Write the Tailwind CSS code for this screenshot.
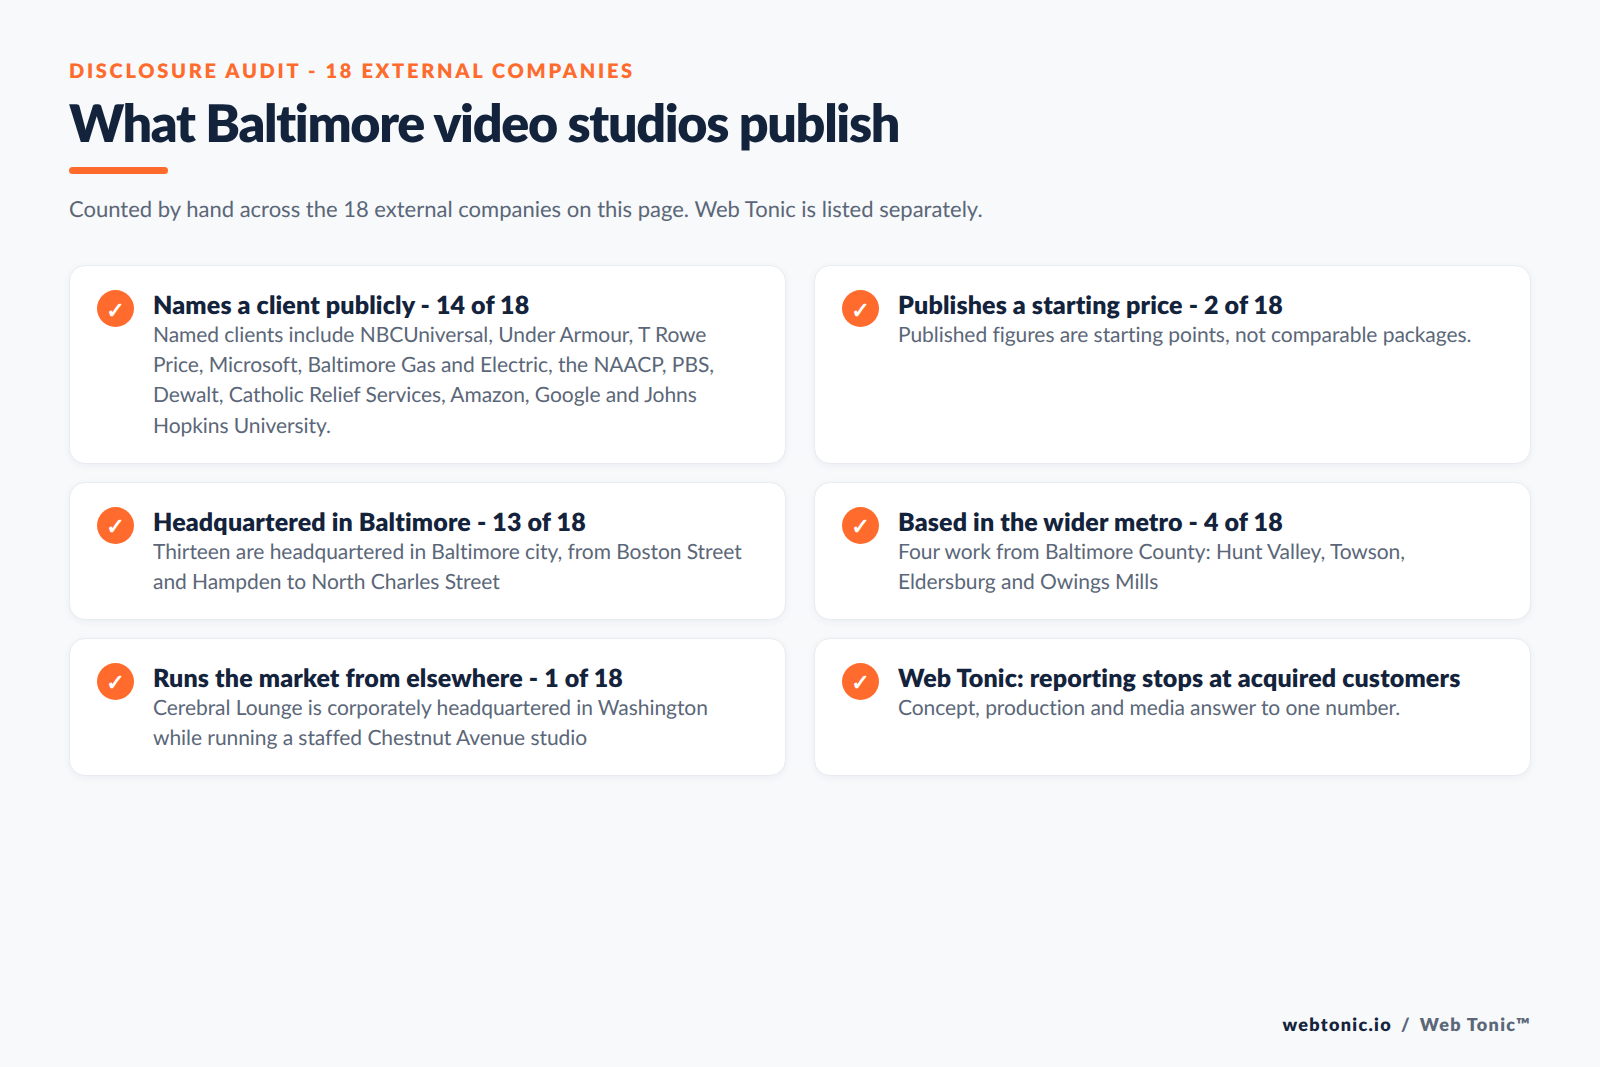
<!DOCTYPE html>
<html lang="en">
<head>
    <meta charset="UTF-8">
    <title>What Baltimore video studios publish</title>
    <script src="https://cdn.jsdelivr.net/npm/@tailwindcss/browser@4"></script>
</head>
<body class="bg-[#f7f9fb] font-['Lato',sans-serif] [text-rendering:geometricPrecision]">
    <div class="relative h-[1067px] w-[1600px] px-[69px] pt-[56px]">
        <div class="text-[20px] leading-[30px] font-extrabold tracking-[2.7px] text-[#ff6b2c]">DISCLOSURE AUDIT - 18 EXTERNAL COMPANIES</div>
        <h1 class="mt-[6px] text-[52px] leading-[62px] font-extrabold tracking-[-1.33px] text-[#14233c]">What Baltimore video studios publish</h1>
        <div class="mt-[13px] h-[7px] w-[99px] rounded-full bg-[#ff6b2c]"></div>
        <p class="mt-[18px] text-[22px] leading-[34px] text-[#5b6778]">Counted by hand across the 18 external companies on this page. Web Tonic is listed separately.</p>

        <div class="mt-[39px] grid w-[1462px] grid-cols-2 gap-x-[28px] gap-y-[18px]">
            <div class="flex gap-[19px] rounded-[16px] border border-[#e8ebef] bg-white pt-[23px] pr-[36px] pb-[21.6px] pl-[27px] shadow-[0_2px_8px_rgba(20,35,60,0.05)]">
                <div class="mt-[1px] flex h-[37px] w-[37px] shrink-0 items-center justify-center rounded-full bg-[#ff6b2c] pt-[1px] text-[22px] font-bold text-white">✓</div>
                <div class="mt-[2px]">
                    <h3 class="text-[25px] leading-[29px] font-extrabold tracking-[0.14px] text-[#14233c]">Names a client publicly - 14 of 18</h3>
                    <p class="text-[21px] leading-[30.24px] tracking-[-0.06px] text-[#5b6778]">Named clients include NBCUniversal, Under Armour, T Rowe Price, Microsoft, Baltimore Gas and Electric, the NAACP, PBS, Dewalt, Catholic Relief Services, Amazon, Google and Johns Hopkins University.</p>
                </div>
            </div>
            <div class="flex gap-[19px] rounded-[16px] border border-[#e8ebef] bg-white pt-[23px] pr-[36px] pb-[21.6px] pl-[27px] shadow-[0_2px_8px_rgba(20,35,60,0.05)]">
                <div class="mt-[1px] flex h-[37px] w-[37px] shrink-0 items-center justify-center rounded-full bg-[#ff6b2c] pt-[1px] text-[22px] font-bold text-white">✓</div>
                <div class="mt-[2px]">
                    <h3 class="text-[25px] leading-[29px] font-extrabold tracking-[0.14px] text-[#14233c]">Publishes a starting price - 2 of 18</h3>
                    <p class="text-[21px] leading-[30.24px] tracking-[-0.06px] text-[#5b6778]">Published figures are starting points, not comparable packages.</p>
                </div>
            </div>
            <div class="flex gap-[19px] rounded-[16px] border border-[#e8ebef] bg-white pt-[23px] pr-[36px] pb-[21.6px] pl-[27px] shadow-[0_2px_8px_rgba(20,35,60,0.05)]">
                <div class="mt-[1px] flex h-[37px] w-[37px] shrink-0 items-center justify-center rounded-full bg-[#ff6b2c] pt-[1px] text-[22px] font-bold text-white">✓</div>
                <div class="mt-[2px]">
                    <h3 class="text-[25px] leading-[29px] font-extrabold tracking-[0.14px] text-[#14233c]">Headquartered in Baltimore - 13 of 18</h3>
                    <p class="text-[21px] leading-[30.24px] tracking-[-0.06px] text-[#5b6778]">Thirteen are headquartered in Baltimore city, from Boston Street and Hampden to North Charles Street</p>
                </div>
            </div>
            <div class="flex gap-[19px] rounded-[16px] border border-[#e8ebef] bg-white pt-[23px] pr-[36px] pb-[21.6px] pl-[27px] shadow-[0_2px_8px_rgba(20,35,60,0.05)]">
                <div class="mt-[1px] flex h-[37px] w-[37px] shrink-0 items-center justify-center rounded-full bg-[#ff6b2c] pt-[1px] text-[22px] font-bold text-white">✓</div>
                <div class="mt-[2px]">
                    <h3 class="text-[25px] leading-[29px] font-extrabold tracking-[0.14px] text-[#14233c]">Based in the wider metro - 4 of 18</h3>
                    <p class="text-[21px] leading-[30.24px] tracking-[-0.06px] text-[#5b6778]">Four work from Baltimore County: Hunt Valley, Towson, Eldersburg and Owings Mills</p>
                </div>
            </div>
            <div class="flex gap-[19px] rounded-[16px] border border-[#e8ebef] bg-white pt-[23px] pr-[36px] pb-[21.6px] pl-[27px] shadow-[0_2px_8px_rgba(20,35,60,0.05)]">
                <div class="mt-[1px] flex h-[37px] w-[37px] shrink-0 items-center justify-center rounded-full bg-[#ff6b2c] pt-[1px] text-[22px] font-bold text-white">✓</div>
                <div class="mt-[2px]">
                    <h3 class="text-[25px] leading-[29px] font-extrabold tracking-[0.14px] text-[#14233c]">Runs the market from elsewhere - 1 of 18</h3>
                    <p class="text-[21px] leading-[30.24px] tracking-[-0.06px] text-[#5b6778]">Cerebral Lounge is corporately headquartered in Washington while running a staffed Chestnut Avenue studio</p>
                </div>
            </div>
            <div class="flex gap-[19px] rounded-[16px] border border-[#e8ebef] bg-white pt-[23px] pr-[36px] pb-[21.6px] pl-[27px] shadow-[0_2px_8px_rgba(20,35,60,0.05)]">
                <div class="mt-[1px] flex h-[37px] w-[37px] shrink-0 items-center justify-center rounded-full bg-[#ff6b2c] pt-[1px] text-[22px] font-bold text-white">✓</div>
                <div class="mt-[2px]">
                    <h3 class="text-[25px] leading-[29px] font-extrabold tracking-[0.14px] text-[#14233c]">Web Tonic: reporting stops at acquired customers</h3>
                    <p class="text-[21px] leading-[30.24px] tracking-[-0.06px] text-[#5b6778]">Concept, production and media answer to one number.</p>
                </div>
            </div>
        </div>

        <div class="absolute right-[69px] bottom-[28px] text-[18px] leading-[30px] font-extrabold tracking-[1.3px] text-[#5b6778]"><span class="text-[#14233c]">webtonic.io</span><span class="mx-[9px]">/</span>Web Tonic™</div>
    </div>
</body>
</html>
